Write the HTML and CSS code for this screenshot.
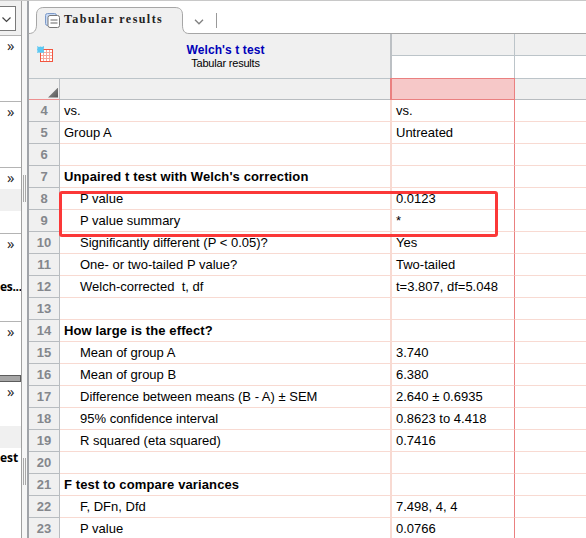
FILE: index.html
```
<!DOCTYPE html>
<html lang="en">
<head>
  <meta charset="UTF-8">
  <title>Welch's t test - Tabular results</title>
  <link rel="stylesheet" href="styles.css">
</head>
<body>
  <div class="app">
    <aside class="sidebar">
      <div class="search">
        <div class="combo">
          <svg width="11" height="8" viewBox="0 0 11 8"><path d="M1.500 1.500l4 4 4-4" fill="none" stroke="#444" stroke-width="1.2"/></svg>
        </div>
      </div>
      <div class="group"><span class="more">»</span></div>
      <div class="group"><span class="more">»</span></div>
      <div class="group"><span class="more">»</span><div class="selected"></div></div>
      <div class="group tall"><span class="more">»</span><div class="item">es...</div></div>
      <div class="group short"><span class="more">»</span></div>
      <div class="scrollbar"></div>
      <div class="group last"><span class="more">»</span><div class="selected"></div><div class="item">est</div></div>
    </aside>

    <div class="splitter">
      <div class="grip"></div>
      <div class="grip"></div>
    </div>

    <main class="sheet">
      <div class="tabs">
        <svg class="tab-shape" width="558" height="34" viewBox="0 0 558 34">
          <path d="M0 33.5h1C6 33.5 8.500 30 8.500 25V15C8.500 10 11 7.500 16 7.500H147C152 7.500 154.500 10 154.500 15V25C154.500 30 156 33.500 161 33.500V34H0z" fill="#f0f0f0"/>
          <path d="M0 33.500h1C6 33.500 8.500 30 8.500 25V15C8.500 10 11 7.500 16 7.500H147C152 7.500 154.500 10 154.500 15V25C154.500 30 156 33.500 161 33.500H558" fill="none" stroke="#a6a6a6"/>
        </svg>
        <svg class="tab-icon" width="16" height="16" viewBox="0 0 16 16">
          <rect x=".5" y=".5" width="11" height="12" rx="2" fill="#c8daf5" stroke="#7d9ac8"/>
          <rect x="3" y="2.500" width="11.500" height="12" rx="2" fill="#fff" stroke="#777"/>
          <path d="M5.500 7h7M5.500 10h7" stroke="#666" stroke-width="1.200"/>
        </svg>
        <span class="tab-label">Tabular results</span>
        <svg class="tab-menu" width="10" height="6" viewBox="0 0 10 6"><path d="M1 .8l4 4 4-4" fill="none" stroke="#808080" stroke-width="1.300"/></svg>
        <span class="tab-divider"></span>
      </div>

      <div class="head">
        <div class="title">
          <svg class="title-icon" width="17" height="17" viewBox="0 0 17 17">
            <rect x="3.500" y="3.500" width="12" height="12" fill="#fff" stroke="#f2553f"/>
            <path d="M6.500 4v11M9.500 4v11M12.500 4v11M4 6.500h11M4 9.500h11M4 12.500h11" stroke="#f7a89c"/>
            <path d="M0 0l2 1 1.500-.5L5 1l2-1v2l-.5 1.500L7 5v2L5 6.500 3.500 7 2 6.500 0 7l.5-2L0 3.500.5 2z" fill="#5cc8f2"/>
          </svg>
          <h1>Welch's t test</h1>
          <p>Tabular results</p>
        </div>
        <div class="col-title"></div>
        <div class="col-title"></div>
      </div>

      <table>
        <colgroup><col class="c-num"><col class="c-label"><col class="c-value"><col></colgroup>
        <tr class="letters"><th><div class="corner"></div></th><th></th><th class="active"></th><th></th></tr>
        <tr><th>4</th><td>vs.</td><td>vs.</td><td></td></tr>
        <tr><th>5</th><td>Group A</td><td>Untreated</td><td></td></tr>
        <tr><th>6</th><td></td><td></td><td></td></tr>
        <tr class="section"><th>7</th><td>Unpaired t test with Welch's correction</td><td></td><td></td></tr>
        <tr class="sub"><th>8</th><td>P value</td><td>0.0123</td><td></td></tr>
        <tr class="sub"><th>9</th><td>P value summary</td><td>*</td><td></td></tr>
        <tr class="sub"><th>10</th><td>Significantly different (P &lt; 0.05)?</td><td>Yes</td><td></td></tr>
        <tr class="sub"><th>11</th><td>One- or two-tailed P value?</td><td>Two-tailed</td><td></td></tr>
        <tr class="sub"><th>12</th><td>Welch-corrected&nbsp; t, df</td><td>t=3.807, df=5.048</td><td></td></tr>
        <tr><th>13</th><td></td><td></td><td></td></tr>
        <tr class="section"><th>14</th><td>How large is the effect?</td><td></td><td></td></tr>
        <tr class="sub"><th>15</th><td>Mean of group A</td><td>3.740</td><td></td></tr>
        <tr class="sub"><th>16</th><td>Mean of group B</td><td>6.380</td><td></td></tr>
        <tr class="sub"><th>17</th><td>Difference between means (B - A) ± SEM</td><td>2.640 ± 0.6935</td><td></td></tr>
        <tr class="sub"><th>18</th><td>95% confidence interval</td><td>0.8623 to 4.418</td><td></td></tr>
        <tr class="sub"><th>19</th><td>R squared (eta squared)</td><td>0.7416</td><td></td></tr>
        <tr><th>20</th><td></td><td></td><td></td></tr>
        <tr class="section"><th>21</th><td>F test to compare variances</td><td></td><td></td></tr>
        <tr class="sub"><th>22</th><td>F, DFn, Dfd</td><td>7.498, 4, 4</td><td></td></tr>
        <tr class="sub"><th>23</th><td>P value</td><td>0.0766</td><td></td></tr>
      </table>
      <div class="callout"></div>
    </main>
  </div>
</body>
</html>
```
FILE: styles.css
```
* {
  box-sizing: border-box;
}

body {
  margin: 0;
  font-family: "Liberation Sans", Arial, sans-serif;
  font-size: 13px;
  color: #000;
  background: #fff;
  overflow: hidden;
}

.app {
  display: flex;
  width: 586px;
  height: 538px;
  border-top: 1px solid #c8c8c8;
  overflow: hidden;
}

/* left navigator */
.sidebar {
  width: 22px;
  flex: none;
  border-right: 1px solid #a0a0a0;
  overflow: hidden;
}

.search {
  height: 35px;
  padding-top: 5px;
  background: #f0f0f0;
  border-bottom: 1px solid #b4b4b4;
}

.combo {
  width: 16px;
  height: 25px;
  padding: 9px 0 0 1px;
  background: #fff;
  border: 1px solid #7a7a7a;
  border-left: 0;
}

.combo svg {
  display: block;
}

.group {
  height: 66px;
  border-bottom: 1px solid #b4b4b4;
}

.group.tall {
  height: 88px;
}

.group.short {
  height: 53px;
  border-bottom: 0;
}

.group.last {
  height: 160px;
  border-bottom: 0;
}

.more {
  display: block;
  height: 21px;
  padding-left: 7px;
  font: 15px/19px "Open Sans", sans-serif;
  color: #222;
}

.selected {
  height: 22px;
  background: #f0f0f0;
}

.item {
  font: bold 12px/20px "Open Sans", sans-serif;
  text-align: right;
  white-space: nowrap;
}

.tall .item {
  margin-top: 22px;
  letter-spacing: -0.3px;
}

.scrollbar {
  height: 7px;
  background: #a6a6a6;
  border: 1px solid #5c5c5c;
  border-left: 0;
}

.last .selected {
  margin-top: 23px;
}

.last .item {
  padding-right: 4px;
}

.splitter {
  width: 7px;
  flex: none;
  padding: 174px 0 0 1px;
  background: #f6f6f6;
  border-right: 2px solid #a0a3a8;
}

.grip {
  width: 3px;
  height: 27px;
  margin-bottom: 256px;
  border: solid #a8a8a8;
  border-width: 0 1px;
}

/* results sheet */
.sheet {
  position: relative;
  width: 557px;
  flex: none;
}

.tabs {
  display: flex;
  position: relative;
  height: 33px;
}

.tab-shape {
  position: absolute;
  left: -1px;
  top: -1px;
}

.tab-icon {
  position: relative;
  margin: 12px 0 0 16px;
}

.tab-label {
  position: relative;
  width: 99px;
  margin: 10px 0 0 3px;
  font: bold 12px/16px "Liberation Serif", serif;
  letter-spacing: 1.45px;
  white-space: nowrap;
  color: #222;
}

.tab-menu {
  margin: 18px 0 0 31px;
}

.tab-divider {
  width: 1px;
  height: 15px;
  margin: 12px 0 0 12px;
  background: #999;
}

.head {
  display: flex;
  height: 45px;
  border-bottom: 1px solid #bcc4c9;
}

.title {
  position: relative;
  width: 363px;
  padding: 9px 0 0 32px;
  background: #f0f0f0;
  border-right: 2px solid #bcc0c4;
  text-align: center;
}

.title-icon {
  position: absolute;
  left: 8px;
  top: 12px;
}

.title h1 {
  margin: 0;
  font-size: 12px;
  line-height: 14px;
  letter-spacing: 0.1px;
  color: #0000b8;
}

.title p {
  margin: 0;
  font-size: 11px;
  line-height: 13px;
  letter-spacing: -0.2px;
}

.col-title {
  width: 123px;
  height: 22px;
  background: #f0f0f0;
  border-bottom: 1px solid #bcc4c9;
}

.col-title:nth-child(2) {
  height: 44px;
  background: linear-gradient(#f0f0f0 21px, #bcc4c9 21px, #bcc4c9 22px, #fff 22px);
  border: 0;
  border-right: 1px solid #bcc4c9;
}

.col-title:last-child {
  width: 71px;
}

table {
  width: 557px;
  table-layout: fixed;
  border-collapse: separate;
  border-spacing: 0;
}

.c-num {
  width: 31px;
}

.c-label {
  width: 332px;
}

.c-value {
  width: 123px;
}

th {
  height: 22px;
  padding: 0;
  background: #f0f0f0;
  border-right: 1px solid #b8bcc0;
  border-bottom: 1px solid #b8bcc0;
  color: #84878c;
}

td {
  padding: 0 0 0 4px;
  border-bottom: 1px solid #f8dad2;
  line-height: 21px;
  white-space: nowrap;
}

td:nth-child(2) {
  border-right: 2px solid #f8dad2;
}

td:nth-child(3) {
  border-right: 1px solid #ea8080;
}

.section td {
  font-weight: bold;
  letter-spacing: 0.12px;
}

.sub td:nth-child(2) {
  padding-left: 20px;
}

.letters th {
  height: 21px;
  border-right: 0;
}

.letters th:first-child {
  border-right: 1px solid #b8bcc0;
  border-bottom-color: #ee9090;
}

.letters .active {
  background: #f6c8c8;
  border-right: 1px solid #ea8080;
  border-bottom-color: #ea8080;
  box-shadow: 0 -1px #ea8080, -2px 0 #ea8080, -2px -1px #ea8080;
  position: relative;
}

.corner {
  width: 10px;
  height: 10px;
  margin: 7px 0 0 19px;
  background: linear-gradient(135deg, #999, #555);
  clip-path: polygon(100% 0, 100% 100%, 0 100%);
}

/* red frame round the P value rows */
.callout {
  position: absolute;
  left: 30px;
  top: 190px;
  width: 439px;
  height: 46px;
  border: 3px solid #fb3838;
  border-radius: 3px;
}
```
